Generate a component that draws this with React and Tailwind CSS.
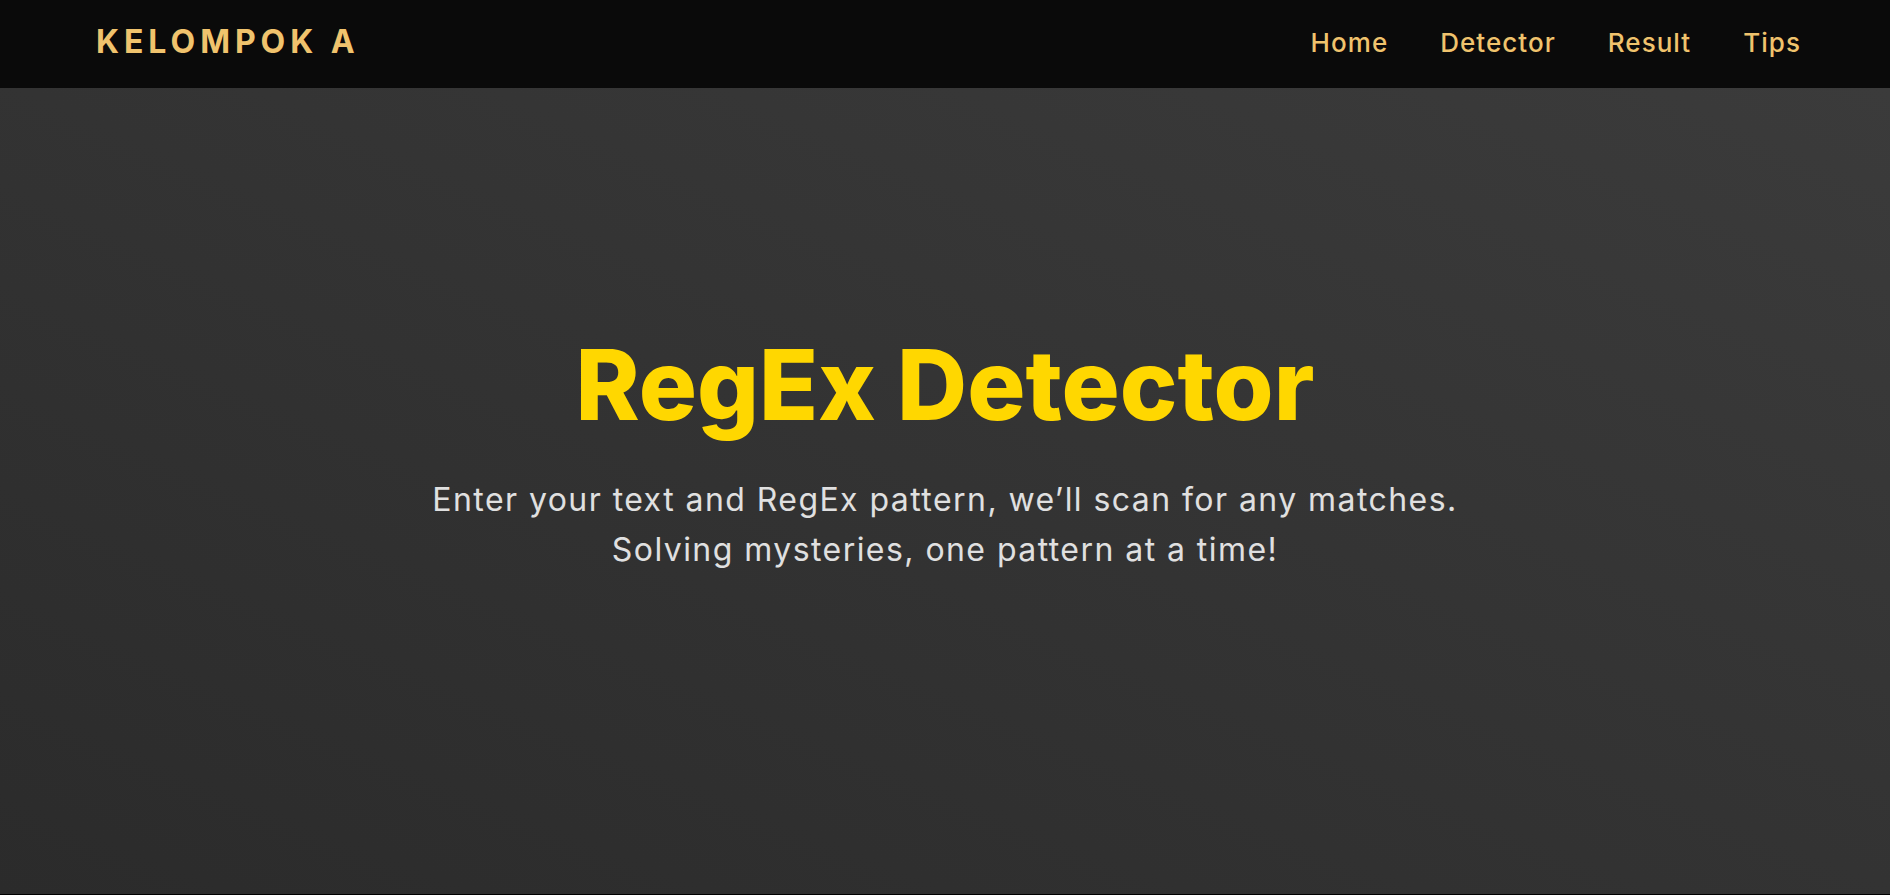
import React from 'react'

const links = ['Home', 'Detector', 'Result', 'Tips']

const App = () => {
  return (
    <div className="min-h-screen bg-black" style={{ fontFamily: 'Inter, "Open Sans", sans-serif' }}>
      {/* navbar */}
      <nav className="h-[88px] pb-1 bg-[#0a0a0a] flex items-center justify-between pl-[96px] pr-[89px]">
        <div className="text-[32px] font-bold tracking-[0.155em] text-[#f0c36d]">KELOMPOK A</div>
        <ul className="flex items-center gap-[52px]">
          {links.map((l) => (
            <li key={l}>
              <a href="#" className="text-[26px] font-medium tracking-[0.04em] text-[#f0c36d]">{l}</a>
            </li>
          ))}
        </ul>
      </nav>

      {/* hero */}
      <section className="h-[806px] pb-[72px] bg-linear-to-tr from-[#2b2b2b] to-[#3b3b3b] flex flex-col items-center justify-center text-center">
        <h1 className="text-[97px] leading-none font-extrabold text-[#ffd700]">RegEx Detector</h1>
        <p className="mt-[42px] text-[32px] leading-[50px] tracking-[0.045em] text-[#e0e0e0]">
          Enter your text and RegEx pattern, we’ll scan for any matches.
          <br />
          Solving mysteries, one pattern at a time!
        </p>
      </section>
    </div>
  )
}

export default App
